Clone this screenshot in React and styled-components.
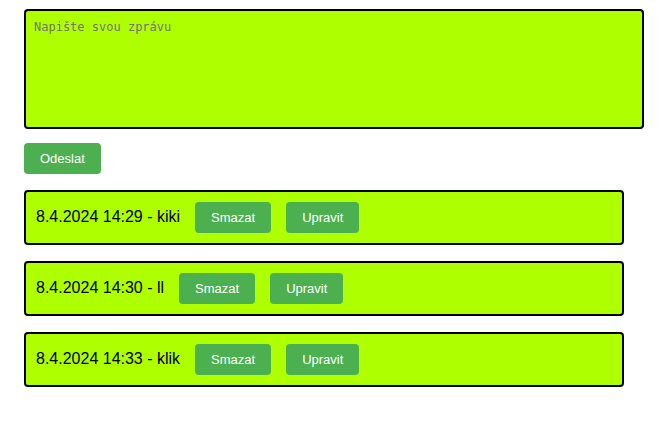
import React from 'react';
import styled, { createGlobalStyle } from 'styled-components';

const GlobalStyle = createGlobalStyle`
  *, *::before, *::after { box-sizing: border-box; }
  body {
    margin: 0;
    background: #fff;
    color: #000;
    font-family: "Liberation Sans", Arial, sans-serif;
    font-size: 16px;
  }
`;

const Page = styled.main`
  padding: 9px 28px 16px 24px;
`;

const MessageForm = styled.form`
  display: flex;
  flex-direction: column;
  align-items: flex-start;
  gap: 14px;
`;

const MessageInput = styled.textarea`
  display: block;
  width: 100%;
  height: 120px;
  padding: 8px;
  border: 2px solid #000;
  border-radius: 4px;
  background: #aeff00;
  font-family: "DejaVu Sans Mono", monospace;
  font-size: 12px;
  line-height: 16px;
  resize: none;
  &::placeholder { color: #757575; }
`;

const Button = styled.button`
  height: 31px;
  padding: 0 16px;
  border: 0;
  border-radius: 4px;
  background: #4caf50;
  color: #fff;
  font-family: inherit;
  font-size: 13px;
  line-height: 15px;
  cursor: pointer;
`;

const MessageList = styled.ul`
  display: flex;
  flex-direction: column;
  gap: 16px;
  margin: 16px 20px 0 0;
  padding: 0;
  list-style: none;
`;

const MessageItem = styled.li`
  display: flex;
  align-items: baseline;
  gap: 15px;
  padding: 10px;
  border: 2px solid #000;
  border-radius: 4px;
  background: #aeff00;
`;

const messages = [
  { time: '8.4.2024 14:29', text: 'kiki' },
  { time: '8.4.2024 14:30', text: 'll' },
  { time: '8.4.2024 14:33', text: 'klik' },
];

export default function App() {
  return (
    <Page>
      <GlobalStyle />
      <MessageForm onSubmit={(event) => event.preventDefault()}>
        <MessageInput aria-label="Zpráva" placeholder="Napište svou zprávu" />
        <Button type="submit">Odeslat</Button>
      </MessageForm>
      <MessageList>
        {messages.map(({ time, text }) => (
          <MessageItem key={time}>
            <span>{time} - {text}</span>
            <Button type="button">Smazat</Button>
            <Button type="button">Upravit</Button>
          </MessageItem>
        ))}
      </MessageList>
    </Page>
  );
}
